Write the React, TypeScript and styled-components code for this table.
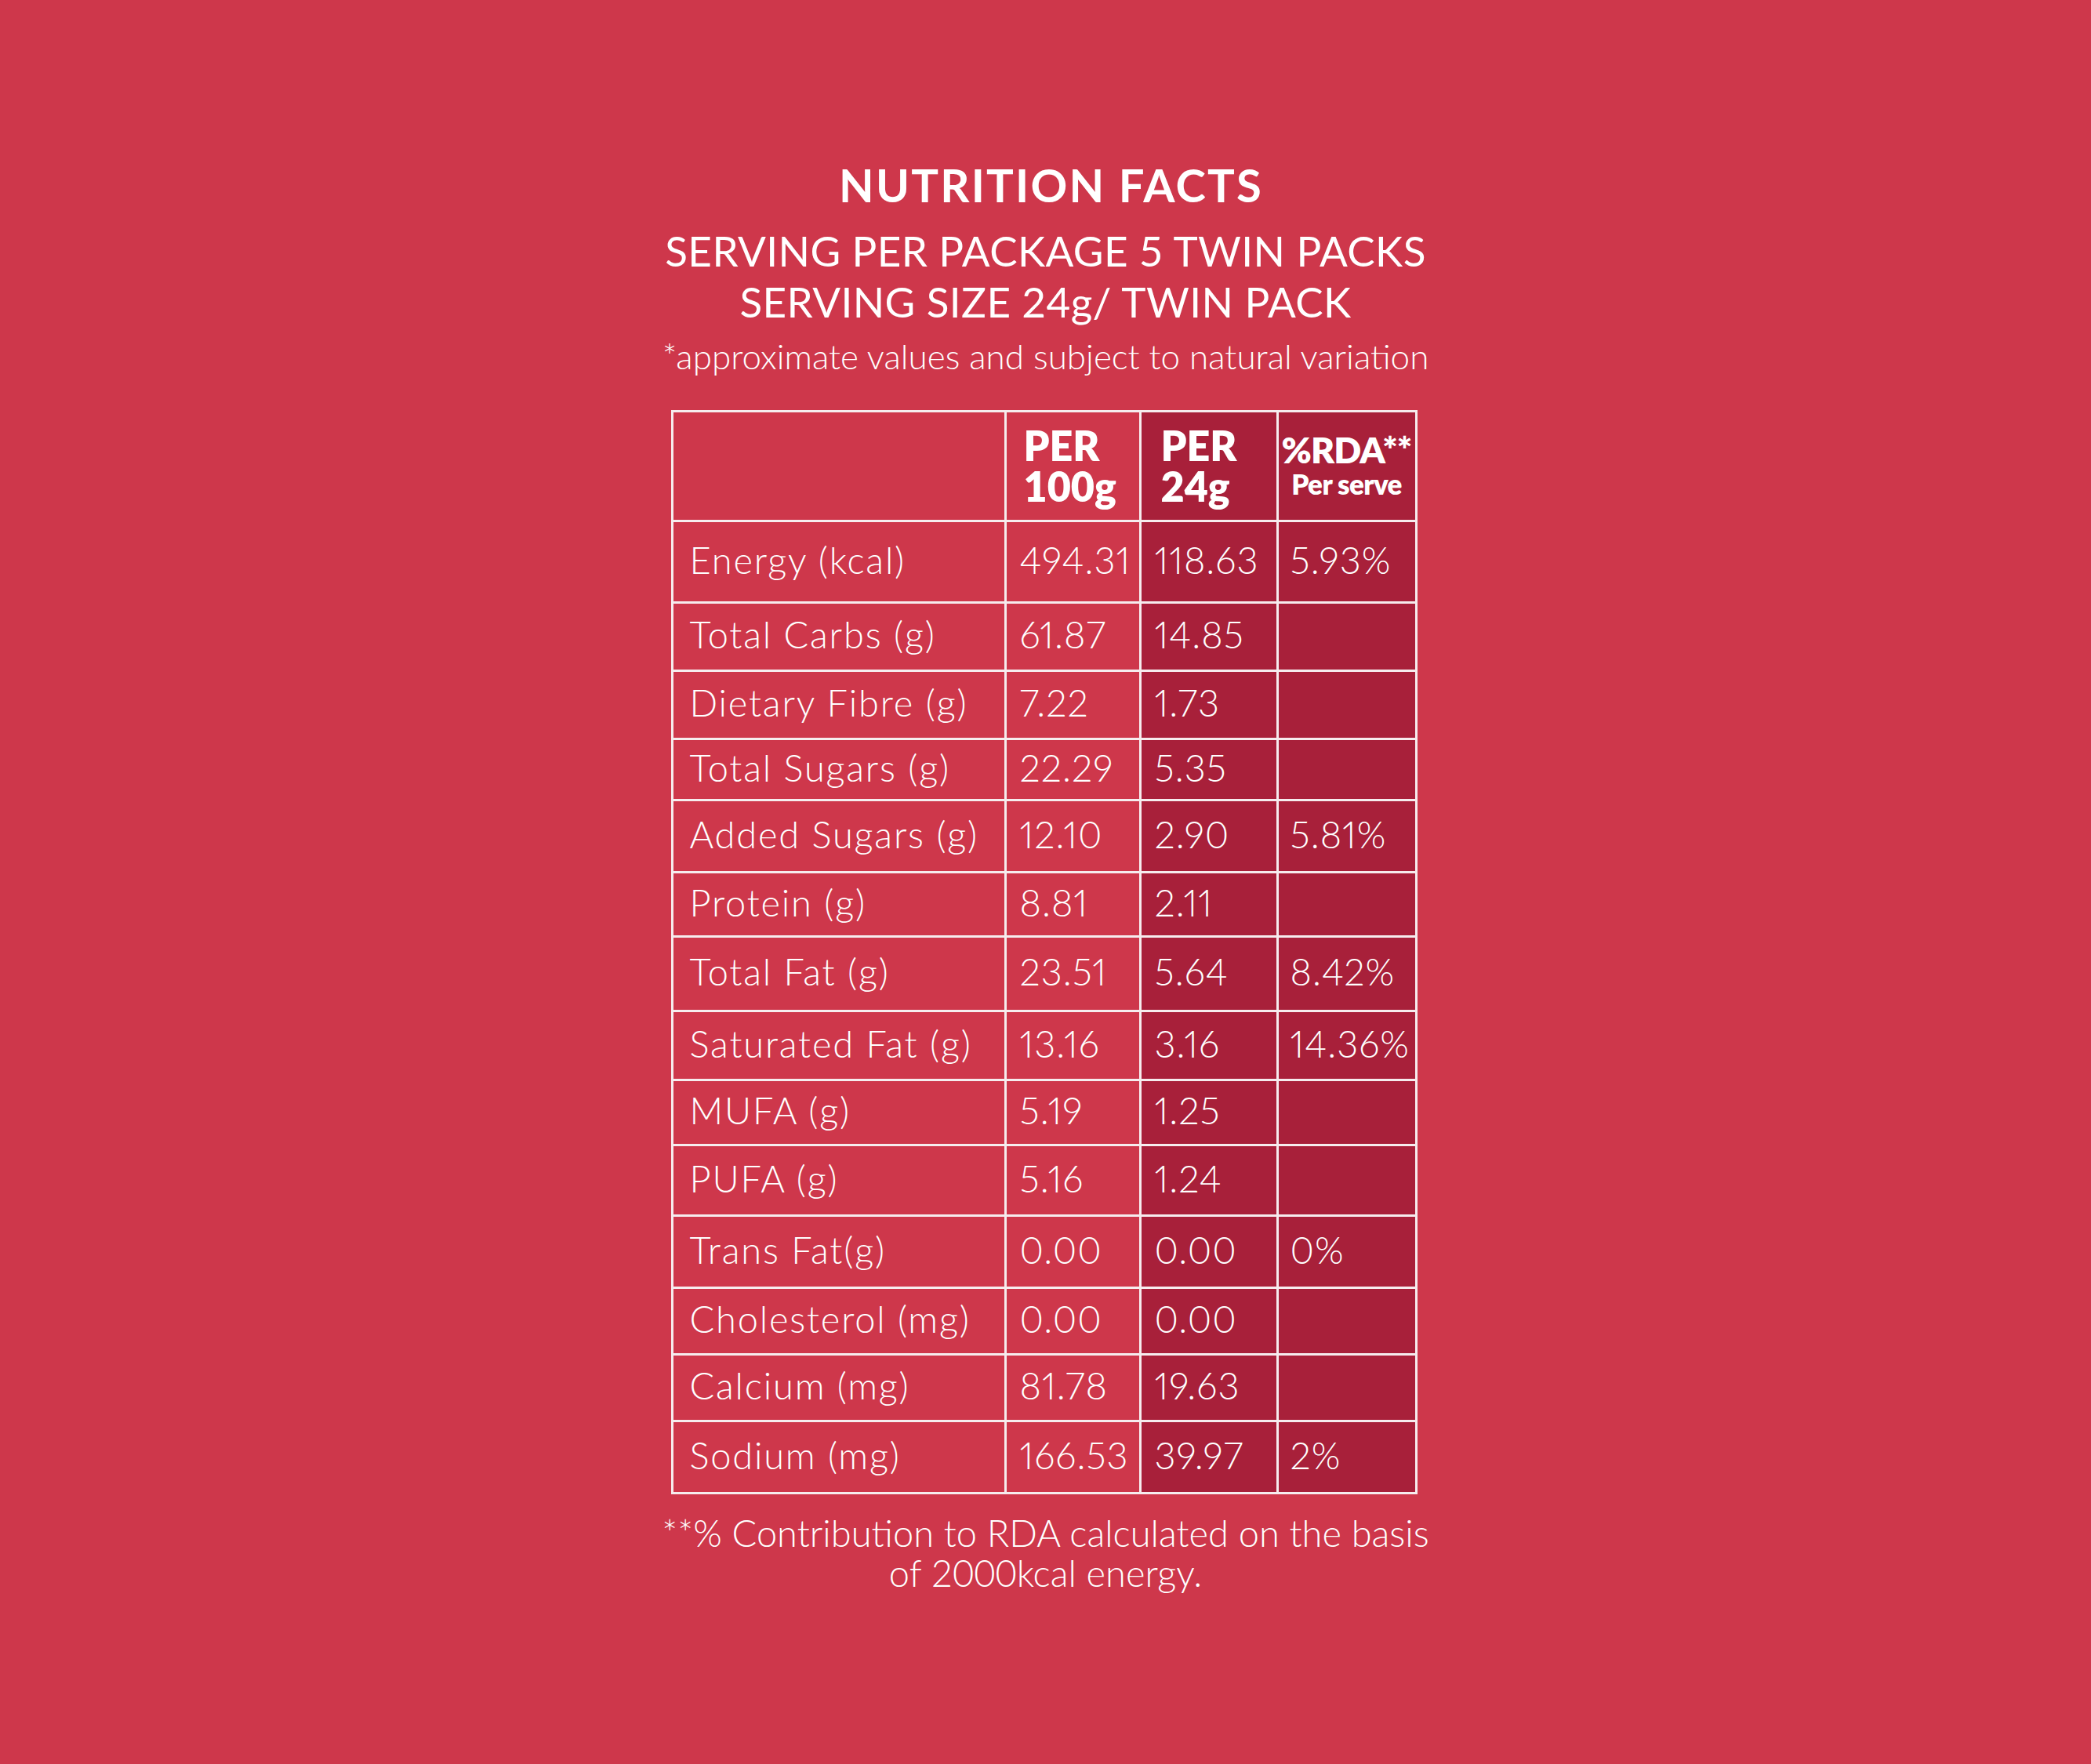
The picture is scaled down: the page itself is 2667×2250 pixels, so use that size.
import styled, { createGlobalStyle } from 'styled-components'

const BG = '#ce374b'
const DARK = '#a8203a'
const LINE = '#f6ecee'

const GlobalStyle = createGlobalStyle`
  html, body {
    margin: 0;
    padding: 0;
    background: ${BG};
  }
  body {
    font-family: Lato, "Open Sans", "Liberation Sans", sans-serif;
    color: #fff;
  }
`

const Page = styled.main`
  min-height: 2250px;
  display: flex;
  flex-direction: column;
  align-items: center;
  padding-top: 204px;
  box-sizing: border-box;
`

const Title = styled.h1`
  margin: 0 0 0 14px;
  font-size: 58px;
  line-height: 64px;
  font-weight: 700;
  letter-spacing: 2.2px;
  text-align: center;
`

const Serving = styled.div`
  margin-top: 19px;
  font-size: 53px;
  line-height: 65px;
  font-weight: 400;
  letter-spacing: 0.4px;
  text-align: center;
`

const Note = styled.p`
  margin: 12px 0 0;
  font-size: 44px;
  line-height: 50px;
  font-weight: 300;
  text-align: center;
`

const Table = styled.div`
  margin: 44px 4px 0 0;
  display: flex;
  flex-direction: column;
  gap: 3px;
  padding: 3px;
  background: ${LINE};
`

const Row = styled.div<{ $h: number }>`
  display: grid;
  grid-template-columns: 422px 169px 172px 174px;
  gap: 3px;
  height: ${p => p.$h}px;
`

const Cell = styled.div<{ $dark?: boolean; $pad: number; $num?: boolean }>`
  background: ${p => (p.$dark ? DARK : BG)};
  display: flex;
  align-items: center;
  padding: 0 0 6px ${p => p.$pad}px;
  font-size: 47px;
  font-weight: 300;
  letter-spacing: ${p => (p.$num ? 1 : 1.8)}px;
  font-variant-numeric: proportional-nums;
  white-space: nowrap;
  overflow: hidden;
`

const HeadCell = styled.div<{ $dark?: boolean; $pad: number }>`
  background: ${p => (p.$dark ? DARK : BG)};
  display: flex;
  flex-direction: column;
  justify-content: center;
  padding: 0 0 2px ${p => p.$pad}px;
  font-weight: 800;
  font-size: 52px;
  line-height: 52px;
`

const RdaHead = styled(HeadCell)`
  align-items: center;
  padding-left: 0;
`

const RdaTop = styled.span`
  font-size: 46px;
  line-height: 46px;
  letter-spacing: -1px;
`

const RdaSub = styled.span`
  font-size: 35px;
  line-height: 40px;
  letter-spacing: -0.6px;
`

const Footer = styled.p`
  margin: 24px 0 0;
  font-size: 47px;
  line-height: 51px;
  font-weight: 300;
  text-align: center;
`

const rows = [
  { label: 'Energy (kcal)', a: '494.31', b: '118.63', c: '5.93%', h: 101 },
  { label: 'Total Carbs (g)', a: '61.87', b: '14.85', c: '', h: 84 },
  { label: 'Dietary Fibre (g)', a: '7.22', b: '1.73', c: '', h: 84 },
  { label: 'Total Sugars (g)', a: '22.29', b: '5.35', c: '', h: 75 },
  { label: 'Added Sugars (g)', a: '12.10', b: '2.90', c: '5.81%', h: 89 },
  { label: 'Protein (g)', a: '8.81', b: '2.11', c: '', h: 79 },
  { label: 'Total Fat (g)', a: '23.51', b: '5.64', c: '8.42%', h: 92 },
  { label: 'Saturated Fat (g)', a: '13.16', b: '3.16', c: '14.36%', h: 85 },
  { label: 'MUFA (g)', a: '5.19', b: '1.25', c: '', h: 80 },
  { label: 'PUFA (g)', a: '5.16', b: '1.24', c: '', h: 87 },
  { label: 'Trans Fat(g)', a: '0.00', b: '0.00', c: '0%', h: 89 },
  { label: 'Cholesterol (mg)', a: '0.00', b: '0.00', c: '', h: 82 },
  { label: 'Calcium (mg)', a: '81.78', b: '19.63', c: '', h: 82 },
  { label: 'Sodium (mg)', a: '166.53', b: '39.97', c: '2%', h: 89 },
]

export default function App() {
  return (
    <>
      <GlobalStyle />
      <Page>
        <Title>NUTRITION FACTS</Title>
        <Serving>
          SERVING PER PACKAGE 5 TWIN PACKS
          <br />
          SERVING SIZE 24g/ TWIN PACK
        </Serving>
        <Note>*approximate values and subject to natural variation</Note>

        <Table>
          <Row $h={137}>
            <HeadCell $pad={0} />
            <HeadCell $pad={22}>
              <span>PER</span>
              <span>100g</span>
            </HeadCell>
            <HeadCell $dark $pad={25}>
              <span>PER</span>
              <span>24g</span>
            </HeadCell>
            <RdaHead $dark $pad={0}>
              <RdaTop>%RDA**</RdaTop>
              <RdaSub>Per serve</RdaSub>
            </RdaHead>
          </Row>
          {rows.map(r => (
            <Row key={r.label} $h={r.h}>
              <Cell $pad={21}>{r.label}</Cell>
              <Cell $num $pad={17}>{r.a}</Cell>
              <Cell $num $dark $pad={17}>{r.b}</Cell>
              <Cell $num $dark $pad={15}>{r.c}</Cell>
            </Row>
          ))}
        </Table>

        <Footer>
          **% Contribution to RDA calculated on the basis
          <br />
          of 2000kcal energy.
        </Footer>
      </Page>
    </>
  )
}
